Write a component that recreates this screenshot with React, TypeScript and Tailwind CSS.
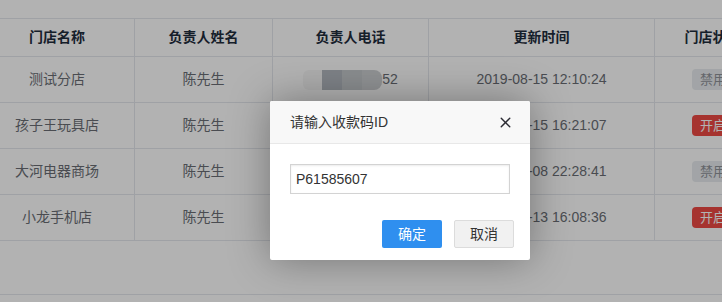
import React from "react";
import { X } from "lucide-react";

const rows = [
	{ name: "测试分店", owner: "陈先生", time: "2019-08-15 12:10:24", open: false, phone: true },
	{ name: "孩子王玩具店", owner: "陈先生", time: "2019-08-15 16:21:07", open: true },
	{ name: "大河电器商场", owner: "陈先生", time: "2019-08-08 22:28:41", open: false },
	{ name: "小龙手机店", owner: "陈先生", time: "2019-08-13 16:08:36", open: true },
];

const cols = ["w-[155px] -ml-[20px]", "w-[138px]", "w-[156px]", "w-[226px]", "w-[116px]"];

const StatusTag: React.FC<{ open: boolean }> = ({ open }) =>
	open ? (
		<span className="inline-flex h-[21px] items-center rounded-[4px] bg-[#ee4a44] px-[8px] text-[13px] text-white">开启</span>
	) : (
		<span className="inline-flex h-[21px] items-center rounded-[4px] bg-[#e8ebef] px-[8px] text-[13px] text-[#8f9399]">禁用</span>
	);

const BlurredPhone = () => (
	<div className="flex items-center">
		<div className="flex h-[20px] items-stretch overflow-hidden rounded-r-[8px]">
			<div className="w-[19px] rounded-l-[6px] bg-[#f6f6f6]" />
			<div className="w-[20px] bg-[#b3b9c0]" />
			<div className="w-[20px] bg-[#c5c9cc]" />
			<div className="w-[20px] bg-[#cdd0d3]" />
		</div>
		<span>52</span>
	</div>
);

export default function App() {
	return (
		<div
			className="relative h-[302px] w-[722px] overflow-hidden bg-white text-[14px]"
			style={{ fontFamily: '"Liberation Sans", "Noto Sans CJK SC", sans-serif' }}
		>
			<div className="pt-[18px]">
				<div className="w-[800px] border-t border-[#e4e7ed]">
					<div className="flex h-[38px] border-b border-[#e4e7ed] font-bold text-[#1f2d3d]">
						{["门店名称", "负责人姓名", "负责人电话", "更新时间", "门店状态"].map((h, i) => (
							<div
								key={h}
								className={`${cols[i]} flex shrink-0 items-center justify-center border-r border-[#e4e7ed]`}
							>
								{h}
							</div>
						))}
					</div>
					{rows.map((r) => (
						<div key={r.name} className="flex h-[46px] border-b border-[#e4e7ed] text-[#6a6e75]">
							<div className={`${cols[0]} flex shrink-0 items-center justify-center border-r border-[#e4e7ed]`}>{r.name}</div>
							<div className={`${cols[1]} flex shrink-0 items-center justify-center border-r border-[#e4e7ed]`}>{r.owner}</div>
							<div className={`${cols[2]} flex shrink-0 items-center justify-center border-r border-[#e4e7ed]`}>
								{r.phone ? <BlurredPhone /> : null}
							</div>
							<div className={`${cols[3]} flex shrink-0 items-center justify-center border-r border-[#e4e7ed]`}>{r.time}</div>
							<div className={`${cols[4]} flex shrink-0 items-center justify-center`}>
								<StatusTag open={r.open} />
							</div>
						</div>
					))}
					<div className="h-[54px] border-b border-[#e4e7ed]" />
				</div>
			</div>

			{/* mask */}
			<div className="absolute inset-0 bg-black/30" />

			{/* dialog */}
			<div className="absolute left-[270px] top-[101px] w-[260px] rounded-[2px] bg-white shadow-[0_0_40px_rgba(0,0,0,0.35)]">
				<div className="flex h-[43px] items-center justify-between rounded-t-[2px] border-b border-[#e8e8e8] bg-[#f8f8f8] pl-[20px] pr-[16px]">
					<span className="text-[14px] text-[#333]">请输入收款码ID</span>
					<X size={17} strokeWidth={2} className="text-[#2b2b33]" />
				</div>
				<div className="px-[20px] pt-[20px]">
					<input
						readOnly
						value="P61585607"
						className="h-[30px] w-[220px] border border-[#d3d3d3] px-[5px] text-[14px] text-[#333] shadow-[inset_0_1px_2px_rgba(0,0,0,0.08)] outline-none"
						style={{ fontFamily: '"Liberation Sans", sans-serif' }}
					/>
				</div>
				<div className="flex justify-end gap-[12px] pb-[12px] pr-[16px] pt-[26px]">
					<button className="h-[28px] w-[60px] rounded-[2px] bg-[#2f8fef] text-[14px] text-white">确定</button>
					<button className="h-[28px] w-[60px] rounded-[2px] border border-[#dcdcdc] bg-[#f1f1f1] text-[14px] text-[#333]">取消</button>
				</div>
			</div>
		</div>
	);
}
